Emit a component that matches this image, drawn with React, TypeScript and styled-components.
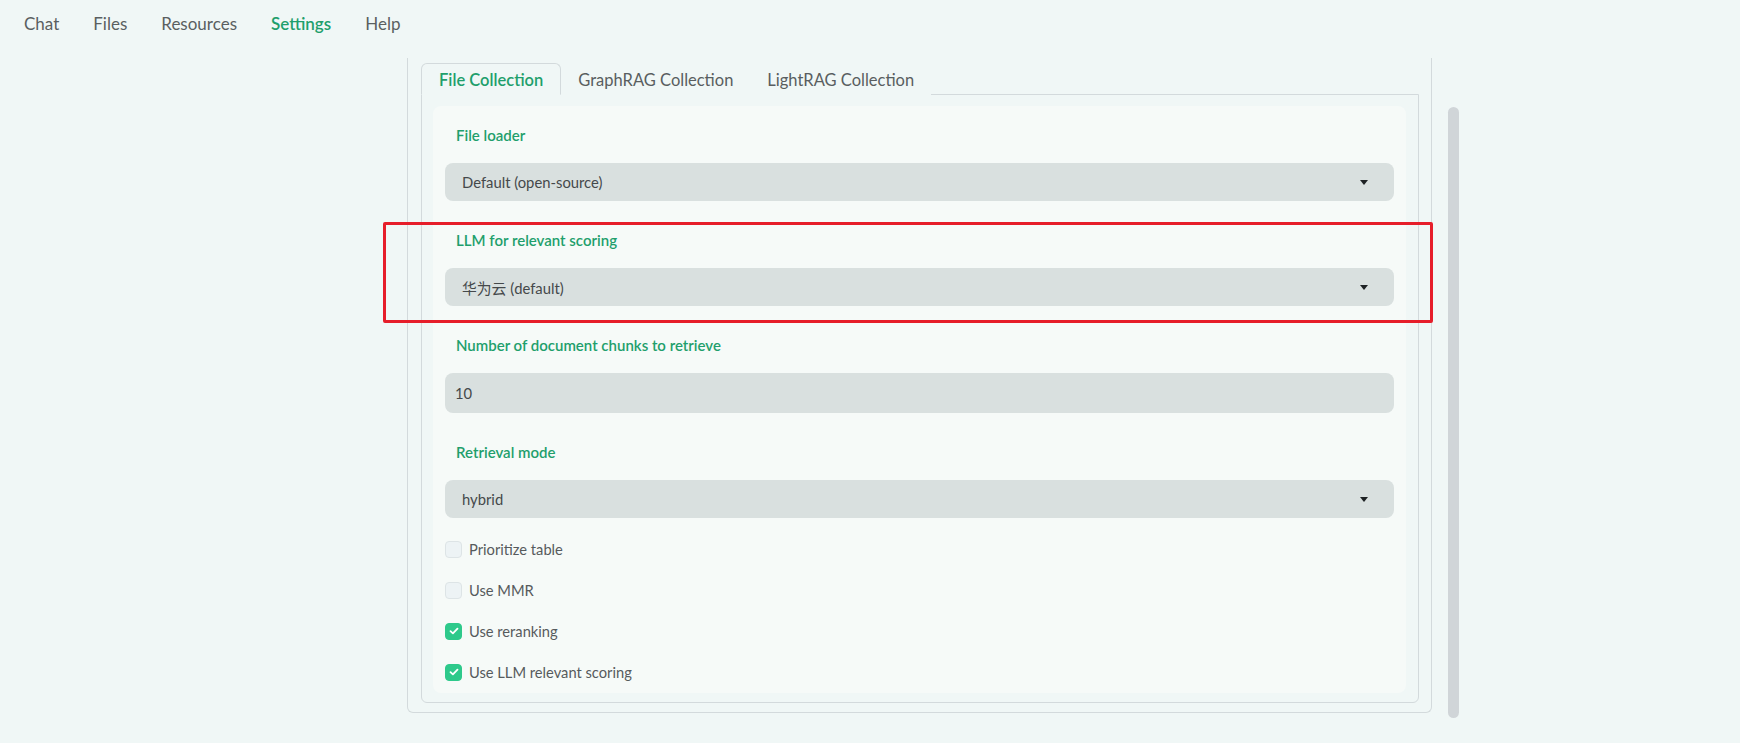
import * as React from 'react';
import styled, { createGlobalStyle } from 'styled-components';

const GlobalStyle = createGlobalStyle`
  html, body {
    margin: 0;
    padding: 0;
    background: #f0f7f6;
    font-family: Lato, "Noto Sans", "Noto Sans CJK SC", sans-serif;
  }
`;

const Page = styled.div`
  position: relative;
  height: 743px;
  overflow: hidden;
`;

const Nav = styled.nav`
  display: flex;
  align-items: center;
  gap: 34px;
  height: 46px;
  padding-left: 24px;
`;

const NavItem = styled.span<{ $active?: boolean }>`
  font-size: 17px;
  color: ${({ $active }) => ($active ? '#1f9f6c' : '#5a5f61')};
  font-weight: ${({ $active }) => ($active ? 600 : 400)};
`;

const Main = styled.div`
  display: flex;
  align-items: flex-start;
  padding-left: 407px;
  margin-top: 12px;
`;

const Panel = styled.div`
  width: 998px;
  border: 1px solid #d3dadc;
  border-top: none;
  border-radius: 0 0 6px 6px;
  padding: 5px 12px 9px 13px;
`;

const TabBar = styled.div`
  display: flex;
  height: 32px;
  position: relative;
  z-index: 1;
  margin-bottom: -1px;
`;

const Tab = styled.div<{ $active?: boolean }>`
  display: flex;
  align-items: center;
  padding: ${({ $active }) => ($active ? '2px 17px 0' : '2px 16px 0')};
  font-size: 16.5px;
  color: ${({ $active }) => ($active ? '#1f9f6c' : '#595e60')};
  font-weight: ${({ $active }) => ($active ? 600 : 400)};
  border: 1px solid ${({ $active }) => ($active ? '#d3dadc' : 'transparent')};
  border-bottom: 1px solid ${({ $active }) => ($active ? '#f0f7f6' : 'transparent')};
  border-radius: 6px 6px 0 0;
  background: #f0f7f6;
`;

const TabPanel = styled.div`
  border: 1px solid #d3dadc;
  border-radius: 0 0 6px 6px;
  padding: 11px 12px 9px 11px;
`;

const Card = styled.div`
  background: #f6faf8;
  border-radius: 8px;
  padding: 19px 12px 11px;
`;

const Fields = styled.div`
  display: flex;
  flex-direction: column;
  gap: 29px;
`;

const Field = styled.div`
  display: flex;
  flex-direction: column;
  gap: 18px;
`;

const Label = styled.div`
  padding-left: 11px;
  line-height: 20px;
  font-size: 15px;
  font-weight: 600;
  color: #1f9f6c;
`;

const SelectBox = styled.div`
  display: flex;
  align-items: center;
  justify-content: space-between;
  height: 38px;
  padding: 0 26px 0 17px;
  background: #d9e0df;
  border-radius: 8px;
  font-size: 14.8px;
  color: #45494b;
`;

const InputBox = styled.div`
  display: flex;
  align-items: center;
  height: 40px;
  padding-left: 10px;
  background: #d9e0df;
  border-radius: 8px;
  font-size: 14.8px;
  color: #45494b;
`;

const Caret = styled.span`
  width: 0;
  height: 0;
  border-left: 4.5px solid transparent;
  border-right: 4.5px solid transparent;
  border-top: 5px solid #1e2224;
`;

const CheckList = styled.div`
  display: flex;
  flex-direction: column;
  gap: 21px;
  padding-top: 21px;
`;

const CheckRow = styled.label`
  display: flex;
  align-items: center;
  gap: 7px;
  height: 20px;
  font-size: 14.7px;
  color: #565b5d;
`;

const Box = styled.span<{ $checked?: boolean }>`
  display: flex;
  align-items: center;
  justify-content: center;
  box-sizing: border-box;
  width: 17px;
  height: 17px;
  border-radius: 4px;
  background: ${({ $checked }) => ($checked ? '#2ec98b' : '#edf3f5')};
  border: 1px solid ${({ $checked }) => ($checked ? '#2ec98b' : '#dde4e6')};
`;

const Scrollbar = styled.div`
  width: 11px;
  height: 611px;
  margin-top: 49px;
  margin-left: 16px;
  background: #d0d5d8;
  border-radius: 6px;
`;

const Highlight = styled.div`
  position: absolute;
  left: 383px;
  top: 222px;
  width: 1044px;
  height: 95px;
  border: 3px solid #e61e2a;
  border-radius: 2px;
  pointer-events: none;
`;

function Select({ value }: { value: string }) {
  return (
    <SelectBox>
      <span>{value}</span>
      <Caret />
    </SelectBox>
  );
}

function Checkbox({ label, checked }: { label: string; checked?: boolean }) {
  return (
    <CheckRow>
      <Box $checked={checked}>
        {checked ? (
          <svg width="10" height="8" viewBox="0 0 10 8" fill="none">
            <path d="M1.5 4.2 L3.9 6.4 L8.5 1.6" stroke="#fff" strokeWidth="1.8" strokeLinecap="round" strokeLinejoin="round" />
          </svg>
        ) : null}
      </Box>
      {label}
    </CheckRow>
  );
}

const navItems = ['Chat', 'Files', 'Resources', 'Settings', 'Help'];
const tabs = ['File Collection', 'GraphRAG Collection', 'LightRAG Collection'];
const checks = [
  { label: 'Prioritize table', checked: false },
  { label: 'Use MMR', checked: false },
  { label: 'Use reranking', checked: true },
  { label: 'Use LLM relevant scoring', checked: true },
];

function App() {
  return (
    <Page>
      <GlobalStyle />
      <Nav>
        {navItems.map((item) => (
          <NavItem key={item} $active={item === 'Settings'}>
            {item}
          </NavItem>
        ))}
      </Nav>
      <Main>
        <Panel>
          <TabBar>
            {tabs.map((tab, i) => (
              <Tab key={tab} $active={i === 0}>
                {tab}
              </Tab>
            ))}
          </TabBar>
          <TabPanel>
            <Card>
              <Fields>
                <Field>
                  <Label>File loader</Label>
                  <Select value="Default (open-source)" />
                </Field>
                <Field>
                  <Label>LLM for relevant scoring</Label>
                  <Select value="华为云 (default)" />
                </Field>
                <Field>
                  <Label>Number of document chunks to retrieve</Label>
                  <InputBox>10</InputBox>
                </Field>
                <Field>
                  <Label>Retrieval mode</Label>
                  <Select value="hybrid" />
                </Field>
              </Fields>
              <CheckList>
                {checks.map((c) => (
                  <Checkbox key={c.label} label={c.label} checked={c.checked} />
                ))}
              </CheckList>
            </Card>
          </TabPanel>
        </Panel>
        <Scrollbar />
      </Main>
      <Highlight />
    </Page>
  );
}

export default App;
